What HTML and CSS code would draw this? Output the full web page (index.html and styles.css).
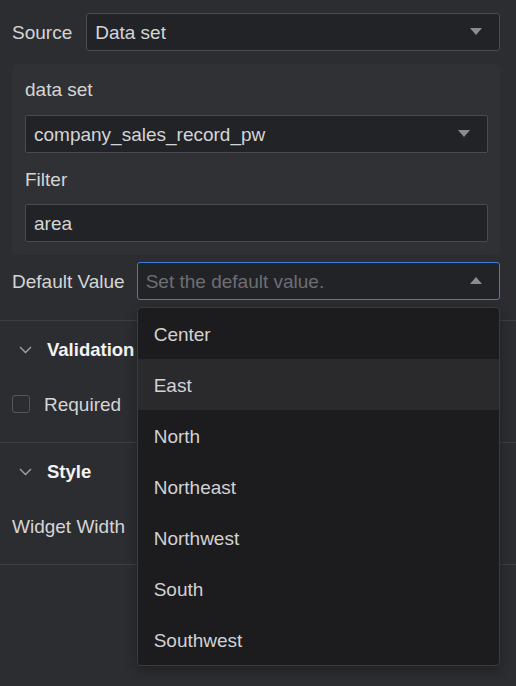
FILE: index.html
```html
<html>
<head>
    <title>Widget settings</title>
    <link rel="stylesheet" href="styles.css">
</head>
<body>
    <div class="painel">
        <div class="linha topo">
            <span class="rotulo">Source</span>
            <div class="campo select">
                <span>Data set</span>
                <svg class="seta" width="12" height="8" viewBox="0 0 12 8"><path d="M0 0 L12 0 L6 7 Z" /></svg>
            </div>
        </div>

        <div class="caixa">
            <div class="rotulo">data set</div>
            <div class="campo select">
                <span>company_sales_record_pw</span>
                <svg class="seta" width="12" height="8" viewBox="0 0 12 8"><path d="M0 0 L12 0 L6 7 Z" /></svg>
            </div>
            <div class="rotulo filtro">Filter</div>
            <div class="campo texto">area</div>
        </div>

        <div class="linha padrao">
            <span class="rotulo">Default Value</span>
            <div class="aberto">
                <div class="campo select ativo">
                    <span class="dica">Set the default value.</span>
                    <svg class="seta" width="12" height="8" viewBox="0 0 12 8"><path d="M0 7 L12 7 L6 0 Z" /></svg>
                </div>
                <ul class="lista">
                    <li>Center</li>
                    <li class="sobre">East</li>
                    <li>North</li>
                    <li>Northeast</li>
                    <li>Northwest</li>
                    <li>South</li>
                    <li>Southwest</li>
                </ul>
            </div>
        </div>

        <div class="secao">
            <div class="titulo">
                <svg class="chevron" width="13" height="8" viewBox="0 0 13 8"><path d="M1 1 L6.5 6.5 L12 1" /></svg>
                <span>Validation</span>
            </div>
            <div class="linha item">
                <span class="caixinha"></span>
                <span class="rotulo">Required</span>
            </div>
        </div>

        <div class="secao">
            <div class="titulo">
                <svg class="chevron" width="13" height="8" viewBox="0 0 13 8"><path d="M1 1 L6.5 6.5 L12 1" /></svg>
                <span>Style</span>
            </div>
            <div class="linha item">
                <span class="rotulo">Widget Width</span>
            </div>
        </div>
        <div class="fim"></div>
    </div>
</body>
</html>
```

FILE: styles.css
```css
body {
    margin: 0;
    width: 516px;
    height: 686px;
    background-color: #2c2d31;
    font-family: "Liberation Sans", Arial, sans-serif;
    font-size: 19px;
    color: #d4d5d7;
}

.painel {
    padding-top: 13px;
}

.linha {
    display: flex;
    align-items: center;
    gap: 14px;
    padding: 0 16px 0 12px;
}

.rotulo {
    line-height: 24px;
    padding-top: 1px;
    white-space: nowrap;
}

.campo {
    box-sizing: border-box;
    height: 38px;
    display: flex;
    align-items: center;
    justify-content: space-between;
    padding: 1px 17px 0 8px;
    background-color: #222327;
    border: 1px solid #4a4b50;
    border-radius: 3px;
    flex: 1;
}

.seta {
    margin-top: -1px;
}

.seta path {
    fill: #8b8c93;
}

.caixa {
    margin: 13px 16px 0 12px;
    padding: 13px 12px 13px 13px;
    background-color: #303135;
    border-radius: 5px;
}

.caixa .rotulo {
    margin-bottom: 13px;
}

.caixa .campo {
    padding-left: 8px;
    border-radius: 2px;
}

.caixa .filtro {
    margin-top: 14px;
    margin-bottom: 12px;
}

.padrao {
    margin-top: 7px;
    gap: 12px;
}

.aberto {
    flex: 1;
    position: relative;
}

.ativo {
    border-color: #3b7ddd;
}

.dica {
    color: #6d6e73;
}

.lista {
    position: absolute;
    top: 45px;
    left: 0;
    right: 0;
    margin: 0;
    padding: 0;
    list-style: none;
    background-color: #1c1c1e;
    border: 1px solid #3a3b3f;
    border-radius: 4px;
    box-shadow: 0 4px 12px rgba(0, 0, 0, 0.3);
    z-index: 2;
}

.lista li {
    height: 51px;
    line-height: 53px;
    padding-left: 16px;
    color: #d2d2d4;
}

.lista .sobre {
    background-color: #2a2a2c;
}

.secao {
    margin-top: 20px;
    border-top: 1px solid #3d3e42;
    padding: 17px 0 19px;
}

.secao + .secao {
    margin-top: 0;
}

.titulo {
    display: flex;
    align-items: center;
    height: 24px;
    padding-left: 19px;
    gap: 15px;
    margin-bottom: 23px;
    font-weight: bold;
    font-size: 18.5px;
    color: #f3f3f3;
}

.chevron path {
    fill: none;
    stroke: #a3a4a8;
    stroke-width: 1.3;
}

.item {
    height: 38px;
    gap: 14px;
}

.caixinha {
    box-sizing: border-box;
    width: 18px;
    height: 18px;
    border: 1px solid #55565b;
    border-radius: 3px;
}

.fim {
    border-top: 1px solid #3d3e42;
}
```
